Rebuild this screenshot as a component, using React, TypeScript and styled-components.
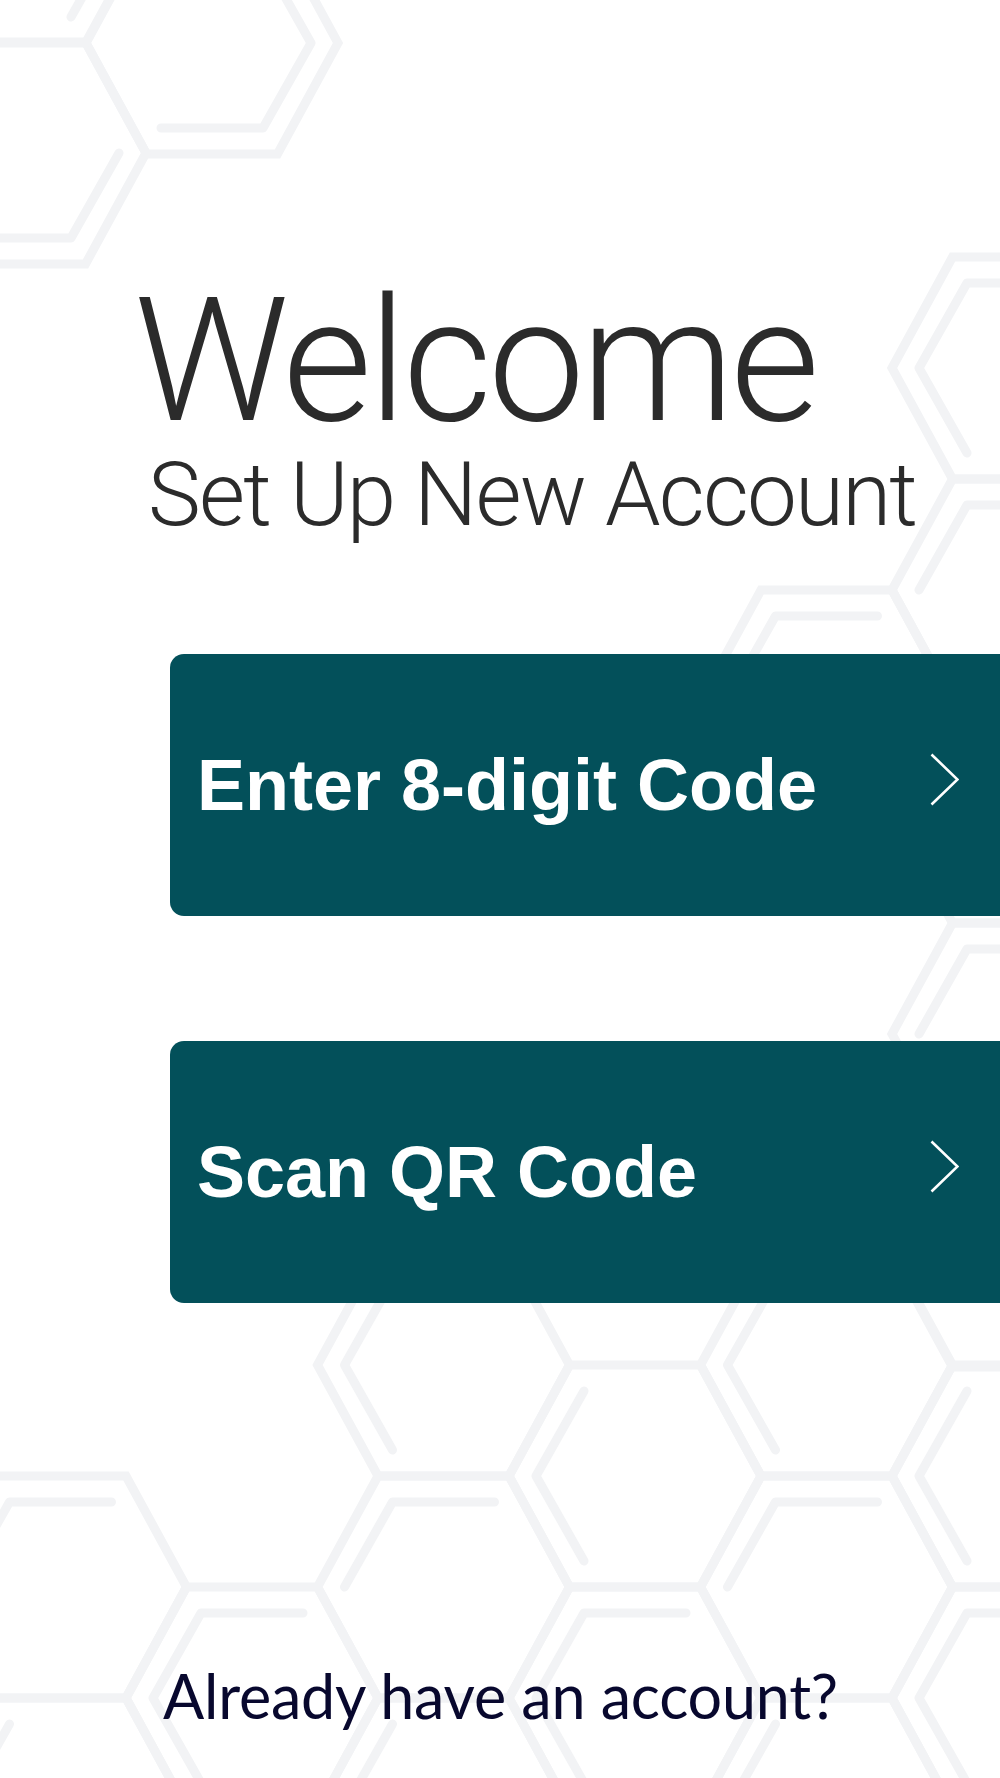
import React from "react";
import styled, { createGlobalStyle } from "styled-components";

type Hex = [number, number, number, number];

// honeycomb cells: centre x, centre y, first inner vertex, inner sides drawn
const PATTERN: Hex[] = [
  // top left corner
  [212, 43, 2, 3],
  [20, 153, 3, 2],
  [20, -68, 3, 1],
  // right edge
  [1018, 368, 5, 3],
  [1018, 590, 0, 2],
  [1018, 812, 0, 0],
  [1018, 1034, 0, 2],
  [1018, 1256, 0, 0],
  [826.5, 701, 0, 2],
  // bottom
  [826.5, 1365, 5, 2],
  [826.5, 1587, 0, 2],
  [826.5, 1809, 5, 2],
  [1018, 1476, 5, 2],
  [1018, 1698, 5, 3],
  [635, 1476, 5, 2],
  [635, 1698, 5, 3],
  [443.5, 1365, 5, 2],
  [443.5, 1587, 0, 2],
  [443.5, 1809, 5, 2],
  [252, 1698, 5, 3],
  [60.5, 1587, 0, 2],
  [60.5, 1809, 5, 2],
];

const corners = (cx: number, cy: number, w: number, t: number, h: number) => [
  [cx - w, cy],
  [cx - t, cy - h],
  [cx + t, cy - h],
  [cx + w, cy],
  [cx + t, cy + h],
  [cx - t, cy + h],
];

const HexPattern = () => (
  <Backdrop viewBox="0 0 1000 1778" aria-hidden="true">
    <g fill="none" stroke="#f2f3f5" strokeWidth={9}>
      {PATTERN.map(([cx, cy, start, count], i) => {
        const outer = corners(cx, cy, 126, 65.5, 111);
        const inner = corners(cx, cy, 99, 51, 85);
        const innerPts = Array.from({ length: count + 1 }, (_, k) => inner[(start + k) % 6]);
        return (
          <g key={i}>
            <path d={"M" + outer.map((p) => p.join(" ")).join(" L") + " Z"} />
            {count > 0 && (
              <polyline
                points={innerPts.map((p) => p.join(",")).join(" ")}
                strokeLinecap="round"
                strokeLinejoin="round"
              />
            )}
          </g>
        );
      })}
    </g>
  </Backdrop>
);

const Chevron = () => (
  <ChevronIcon viewBox="0 0 29 53" aria-hidden="true">
    <polyline points="1.5,1.5 27.5,26.5 1.5,51.5" fill="none" stroke="#fff" strokeWidth={2.6} />
  </ChevronIcon>
);

export default function App() {
  return (
    <>
      <GlobalStyle />
      <Page>
        <HexPattern />
        <Content>
          <Heading>
            <Title>Welcome</Title>
            <Subtitle>Set Up New Account</Subtitle>
          </Heading>
          <Actions>
            <ActionButton type="button">
              <span>Enter 8-digit Code</span>
              <Chevron />
            </ActionButton>
            <ActionButton type="button">
              <span>Scan QR Code</span>
              <Chevron />
            </ActionButton>
          </Actions>
          <SignIn>Already have an account?</SignIn>
        </Content>
      </Page>
    </>
  );
}

const GlobalStyle = createGlobalStyle`
  html, body {
    margin: 0;
    padding: 0;
    background: #ffffff;
  }
  body {
    overflow: hidden;
  }
`;

const Page = styled.main`
  position: relative;
  width: 1000px;
  min-height: 1778px;
  overflow: hidden;
  background: #ffffff;
`;

const Backdrop = styled.svg`
  position: absolute;
  top: 0;
  left: 0;
  width: 1000px;
  height: 1778px;
  pointer-events: none;
`;

const Content = styled.div`
  position: relative;
  display: flex;
  flex-direction: column;
  padding-top: 281px;
`;

const Heading = styled.header`
  display: flex;
  flex-direction: column;
  gap: 12px;
  font-family: Roboto, "Liberation Sans", sans-serif;
  font-weight: 300;
  color: #2b2b2b;
`;

const Title = styled.h1`
  margin: 0 0 0 134px;
  font-weight: 300;
  font-size: 173px;
  line-height: 160px;
  letter-spacing: -4px;
`;

const Subtitle = styled.h2`
  margin: 0 0 0 148px;
  font-weight: 300;
  font-size: 89px;
  line-height: 84px;
  letter-spacing: -1.8px;
`;

const Actions = styled.div`
  display: flex;
  flex-direction: column;
  gap: 125px;
  margin: 117px 0 0 170px;
`;

const ActionButton = styled.button`
  display: flex;
  align-items: center;
  justify-content: space-between;
  box-sizing: border-box;
  width: 830px;
  height: 262px;
  padding: 0 41px 0 27px;
  border: none;
  border-radius: 14px 0 0 14px;
  background: #03505a;
  color: #ffffff;
  font-family: "Liberation Sans", Arial, sans-serif;
  font-weight: 700;
  font-size: 72px;
  text-align: left;
  cursor: pointer;
`;

const ChevronIcon = styled.svg`
  width: 29px;
  height: 53px;
  margin-bottom: 12px;
  flex-shrink: 0;
`;

const SignIn = styled.a`
  margin: 362px 0 0 163px;
  font-family: Lato, "Open Sans", sans-serif;
  font-weight: 400;
  font-size: 61px;
  line-height: 1;
  letter-spacing: -0.2px;
  color: #08082e;
  cursor: pointer;
`;
